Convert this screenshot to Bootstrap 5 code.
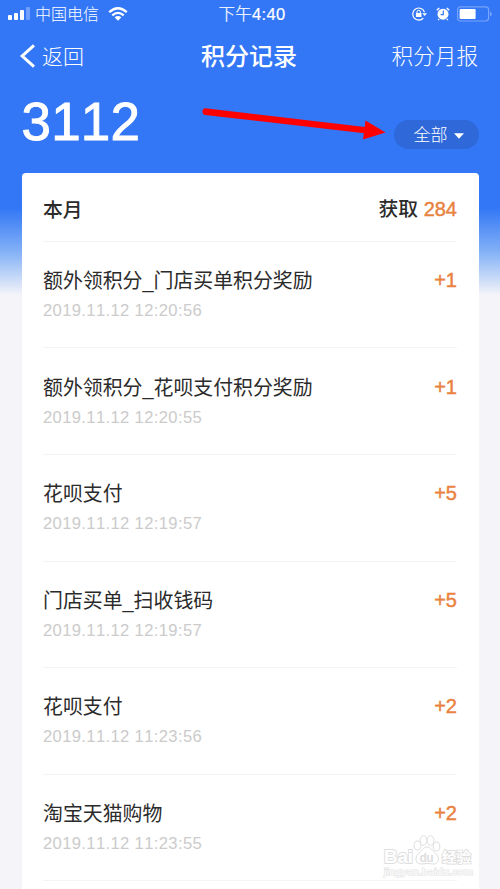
<!DOCTYPE html>
<html lang="zh-CN">
<head>
<meta charset="utf-8">
<meta name="viewport" content="width=device-width, initial-scale=1">
<title>积分记录</title>
<link href="https://cdn.jsdelivr.net/npm/bootstrap@5.3.0/dist/css/bootstrap.min.css" rel="stylesheet">
<style>
html, body { height: 889px; overflow: hidden; }
body { font-family: "Liberation Sans", "Noto Sans CJK SC", sans-serif; color: #2b2b2b; font-kerning: none;
  background: linear-gradient(#3377f6 0 208px, #86b3f6 253px, #f4f4f9 295px); line-height: 1; }
svg { display: block; flex: none; }
.status-bar { height: 28px; padding: 0 8px; font-size: 16px; font-weight: 300; }
.title-bar { height: 56px; padding: 0 22px 0 19px; font-size: 21px; font-weight: 300; }
.page-title { font-size: 24px; font-weight: 500; margin-top: 2px; margin-left: -1px; }
.summary { height: 89px; padding: 0 21.5px; }
.total { font-size: 53px; letter-spacing: .2px; -webkit-text-stroke: .9px #fff; padding-top: 11px; }
.filter { width: 85px; height: 29px; background: #2e68d9; font-size: 17px; font-weight: 300; margin-top: 36px; padding: 2px 0 0 5px; gap: 6px; }
.record-card { margin: 0 21.5px; padding: 0 21.5px; height: 720px; border-radius: 4px 4px 0 0; overflow: hidden; }
.month-row { height: 68.6px; font-size: 19.8px; font-weight: 500; border-bottom: 1.5px solid #f4f4f4; padding-top: 5px; }
.record { height: 106.65px; border-bottom: 1.5px solid #f4f4f4; padding-top: 28.3px; }
.record-name { font-size: 19.9px; height: 22px; line-height: 22px; white-space: nowrap; }
.record-time { font-size: 16.6px; letter-spacing: .36px; color: #cbcbcb; margin-top: 11px; }
.points { color: #e9823f; font-size: 20px; font-weight: 400; -webkit-text-stroke: .45px #e9823f; }
.pointer-arrow { left: 195px; top: 100px; }
.watermark { left: 380px; top: 830px; }
</style>
<script src="https://cdn.jsdelivr.net/npm/bootstrap@5.3.0/dist/js/bootstrap.bundle.min.js"></script>
</head>
<body class="position-relative">
<header class="text-white">
  <div class="status-bar d-flex align-items-center justify-content-between position-relative">
    <div class="d-flex align-items-center">
      <svg width="23" height="14" viewBox="0 0 23 14" fill="#fff"><rect y="8" width="4" height="5" rx="1"/><rect x="6" y="6" width="4" height="7" rx="1"/><rect x="12" y="3" width="4" height="10" rx="1"/><rect x="18" y="0" width="4" height="13" rx="1" opacity=".3"/></svg>
      <span class="ms-1" style="padding-top:2px">中国电信</span>
      <svg style="margin-left:9px" width="20" height="14" viewBox="0 0 20 14" fill="none" stroke="#fff" stroke-width="2.3"><path d="M1.2 5.2Q10-2.7 18.8 5.2M4.3 8.4Q10 3.3 15.7 8.4"/><path d="M6.6 10.3Q10 7.5 13.4 10.3L10 13.8Z" fill="#fff" stroke="none"/></svg>
    </div>
    <span class="position-absolute start-50 translate-middle-x" style="margin-left:2px;font-size:16.5px;letter-spacing:.35px;-webkit-text-stroke:.2px #fff">下午4:40</span>
    <div class="d-flex align-items-center">
      <svg width="15" height="14" viewBox="0 0 15 14"><path d="M12.5 5.2A6 6 0 1 0 11.300 11" fill="none" stroke="#fff" stroke-width="1.2"/><path d="M10.200 6.200H15L12.600 9Z" fill="#fff"/><path d="M5 6.300V5a1.700 1.700 0 0 1 3.400 0v1.300" fill="none" stroke="#fff"/><path d="M3.900 6h5.600v4H3.900z" fill="#fff"/></svg>
      <svg style="margin-left:9px" width="14" height="14" viewBox="0 0 14 14"><circle cx="7" cy="7.2" r="5.5" fill="#fff"/><path d="M.8 3.3L3.3 1M13.200 3.300L10.700 1M3 12l-.8 1M11 12l.8 1" stroke="#fff" stroke-width="1.5"/><path d="M7.300 3.500v4.200H4.600" fill="none" stroke="#3377f6" stroke-width="1.2"/></svg>
      <svg style="margin:0 -1px 0 7px" width="36" height="16" viewBox="0 0 36 16"><rect x=".6" y=".8" width="31" height="14.2" rx="3" fill="none" stroke="#78a3f9" stroke-width="1.2"/><rect x="2.6" y="2.9" width="16" height="10" rx="1" fill="#fff"/><path d="M33.200 5.500q3 2.400 0 5z" fill="#8bb0fa"/></svg>
    </div>
  </div>
  <nav class="title-bar d-flex align-items-center justify-content-between position-relative">
    <div class="d-flex align-items-center"><svg width="17" height="24" viewBox="0 0 17 24"><path d="M15 1.3L3.2 12 15 22.7" fill="none" stroke="#fff" stroke-width="3"/></svg><span style="margin-left:6px">返回</span></div>
    <span class="page-title position-absolute start-50 translate-middle-x">积分记录</span>
    <span style="font-size:21.6px;padding-top:2px">积分月报</span>
  </nav>
  <div class="summary d-flex justify-content-between align-items-start">
    <div class="total">3112</div>
    <div class="filter rounded-pill d-flex align-items-center justify-content-center"><span>全部</span><svg width="10" height="6" viewBox="0 0 10 6"><path d="M0 .3h10L5 5.8z" fill="#fff"/></svg></div>
  </div>
</header>
<main class="record-card bg-white">
  <div class="month-row d-flex justify-content-between align-items-center"><span class="pt-1">本月</span><span>获取 <span class="points">284</span></span></div>
  <div class="record d-flex justify-content-between"><div><div class="record-name">额外领积分_门店买单积分奖励</div><div class="record-time">2019.11.12 12:20:56</div></div><span class="points">+1</span></div>
  <div class="record d-flex justify-content-between"><div><div class="record-name">额外领积分_花呗支付积分奖励</div><div class="record-time">2019.11.12 12:20:55</div></div><span class="points">+1</span></div>
  <div class="record d-flex justify-content-between"><div><div class="record-name">花呗支付</div><div class="record-time">2019.11.12 12:19:57</div></div><span class="points">+5</span></div>
  <div class="record d-flex justify-content-between"><div><div class="record-name">门店买单_扫收钱码</div><div class="record-time">2019.11.12 12:19:57</div></div><span class="points">+5</span></div>
  <div class="record d-flex justify-content-between"><div><div class="record-name">花呗支付</div><div class="record-time">2019.11.12 11:23:56</div></div><span class="points">+2</span></div>
  <div class="record d-flex justify-content-between"><div><div class="record-name">淘宝天猫购物</div><div class="record-time">2019.11.12 11:23:55</div></div><span class="points">+2</span></div>
</main>
<svg class="pointer-arrow position-absolute" width="195" height="45" viewBox="0 0 195 45" fill="#f00"><path d="M10.500 8.300L170 27l-.5 6.300L10 15A3.400 3.400 0 0 1 10.500 8.300Z"/><path d="M170.500 20.500L190.500 32.500 168 39.500Z"/></svg>
<svg class="watermark position-absolute" width="100" height="50" viewBox="0 0 100 50" fill="#fff" stroke="#dedede" font-family="Liberation Sans, Noto Sans CJK SC, sans-serif">
  <g font-weight="700" paint-order="stroke" stroke-width="1.8"><text x="4" y="32.500" font-size="18" textLength="29" lengthAdjust="spacingAndGlyphs">Bai</text><text x="62" y="32" font-size="14" textLength="29" lengthAdjust="spacingAndGlyphs">经验</text></g>
  <ellipse cx="37.500" cy="15.500" rx="3.400" ry="4.500"/><ellipse cx="43.500" cy="10.500" rx="3.400" ry="4.800"/><ellipse cx="50.500" cy="10.500" rx="3.400" ry="4.800"/><ellipse cx="56.500" cy="16.500" rx="3.300" ry="4.500"/>
  <path d="M47 17c4 0 5.500 4 8.500 6.500 5.500 4.500 3 11-2.500 10.500q-6-1-11 0c-6 .5-8-6-4-10 3.500-2.500 5-7 9-7Z"/>
  <text x="39.500" y="32" font-size="12" textLength="14" font-weight="700" fill="#dedede" stroke="none">du</text>
  <text x="4" y="45" font-size="9.500" textLength="89" lengthAdjust="spacingAndGlyphs" stroke="#e4e4e4" stroke-width="1.2" paint-order="stroke">jingyan.baidu.com</text>
</svg>
</body>
</html>
